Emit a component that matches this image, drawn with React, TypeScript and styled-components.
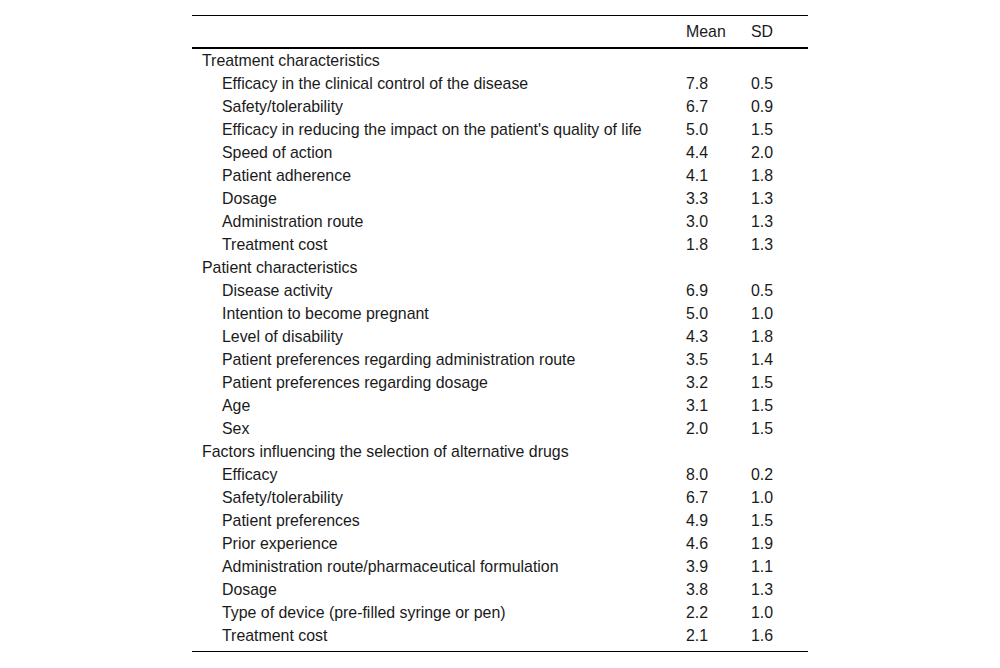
import React from "react";
import styled, { createGlobalStyle } from "styled-components";

const GlobalStyle = createGlobalStyle`
  body {
    margin: 0;
    background: #ffffff;
    font-family: "Liberation Sans", Arial, sans-serif;
    color: #1a1a1a;
  }
`;

const Page = styled.div`
  display: flex;
  justify-content: center;
  padding-top: 15px;
`;

const Table = styled.div`
  width: 616px;
  border-top: 1px solid #000;
  border-bottom: 1px solid #000;
  padding-bottom: 4px;
  font-size: 15.9px;
`;

const Row = styled.div<{ $head?: boolean }>`
  display: grid;
  grid-template-columns: 1fr 65px 57px;
  align-items: center;
  height: ${(p) => (p.$head ? "31px" : "23px")};
  line-height: ${(p) => (p.$head ? "30px" : "22px")};
  border-bottom: ${(p) => (p.$head ? "2px solid #000" : "none")};
`;

const Label = styled.div<{ $indent?: boolean }>`
  padding-left: ${(p) => (p.$indent ? "30px" : "10px")};
  white-space: nowrap;
`;

const Num = styled.div`
  white-space: nowrap;
`;

type Item = [string, string, string];
type Section = { title: string; items: Item[] };

const sections: Section[] = [
  {
    title: "Treatment characteristics",
    items: [
      ["Efficacy in the clinical control of the disease", "7.8", "0.5"],
      ["Safety/tolerability", "6.7", "0.9"],
      ["Efficacy in reducing the impact on the patient's quality of life", "5.0", "1.5"],
      ["Speed of action", "4.4", "2.0"],
      ["Patient adherence", "4.1", "1.8"],
      ["Dosage", "3.3", "1.3"],
      ["Administration route", "3.0", "1.3"],
      ["Treatment cost", "1.8", "1.3"],
    ],
  },
  {
    title: "Patient characteristics",
    items: [
      ["Disease activity", "6.9", "0.5"],
      ["Intention to become pregnant", "5.0", "1.0"],
      ["Level of disability", "4.3", "1.8"],
      ["Patient preferences regarding administration route", "3.5", "1.4"],
      ["Patient preferences regarding dosage", "3.2", "1.5"],
      ["Age", "3.1", "1.5"],
      ["Sex", "2.0", "1.5"],
    ],
  },
  {
    title: "Factors influencing the selection of alternative drugs",
    items: [
      ["Efficacy", "8.0", "0.2"],
      ["Safety/tolerability", "6.7", "1.0"],
      ["Patient preferences", "4.9", "1.5"],
      ["Prior experience", "4.6", "1.9"],
      ["Administration route/pharmaceutical formulation", "3.9", "1.1"],
      ["Dosage", "3.8", "1.3"],
      ["Type of device (pre-filled syringe or pen)", "2.2", "1.0"],
      ["Treatment cost", "2.1", "1.6"],
    ],
  },
];

export default function App() {
  return (
    <>
      <GlobalStyle />
      <Page>
        <Table>
          <Row $head>
            <Label />
            <Num>Mean</Num>
            <Num>SD</Num>
          </Row>
          {sections.map((s) => (
            <React.Fragment key={s.title}>
              <Row>
                <Label>{s.title}</Label>
                <Num />
                <Num />
              </Row>
              {s.items.map(([name, mean, sd]) => (
                <Row key={s.title + name}>
                  <Label $indent>{name}</Label>
                  <Num>{mean}</Num>
                  <Num>{sd}</Num>
                </Row>
              ))}
            </React.Fragment>
          ))}
        </Table>
      </Page>
    </>
  );
}
